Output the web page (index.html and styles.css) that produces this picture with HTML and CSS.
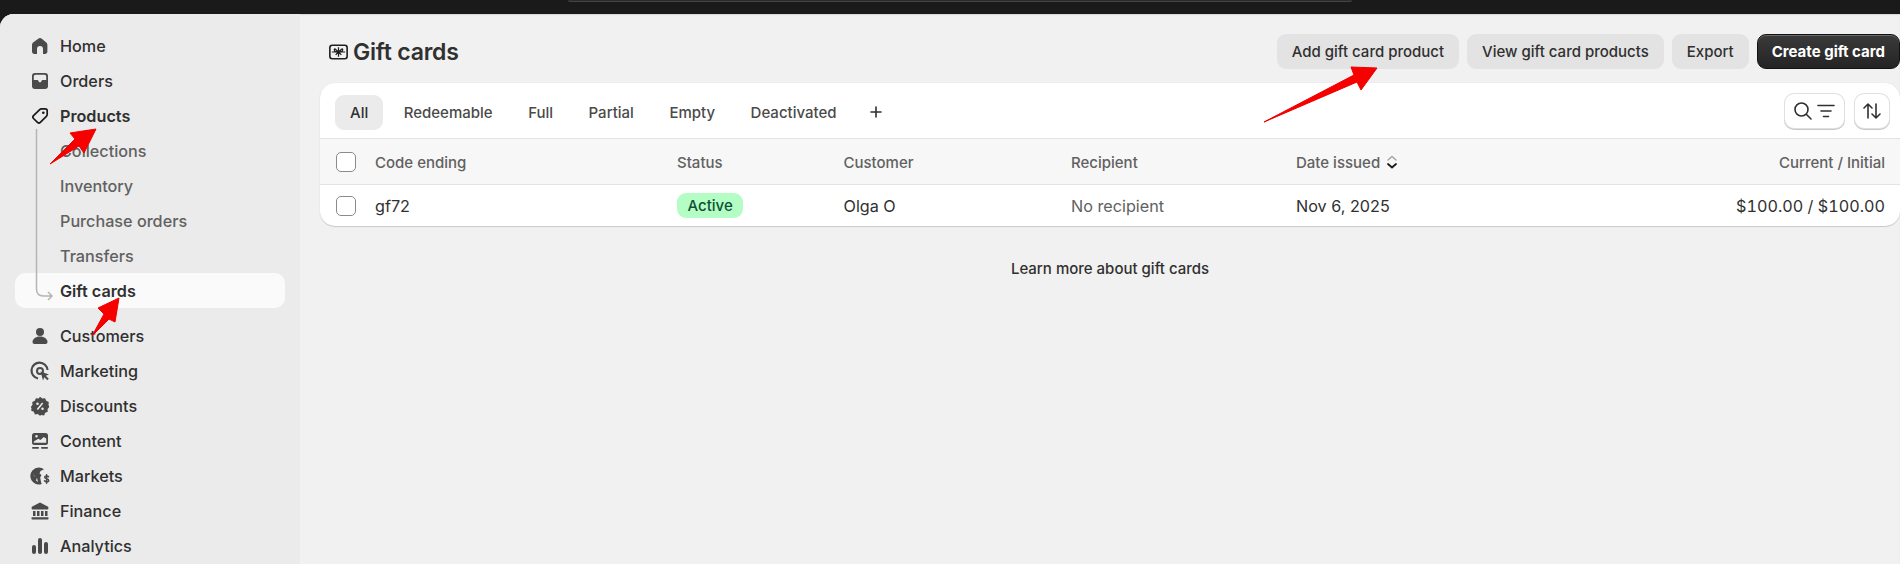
FILE: index.html
```html
<!DOCTYPE html>
<html lang="en">
<head>
<meta charset="utf-8">
<title>Gift cards</title>
<link rel="stylesheet" href="styles.css">
</head>
<body>
<div class="topbar"><div class="searchbox"></div></div>
<div class="app">
  <nav class="sidebar">
    <a class="nav-item"><svg class="nav-icon" viewBox="0 0 20 20"><path fill="#4a4a4a" d="M8.200 2.700a2.800 2.800 0 0 1 3.600 0l4.200 3.600c.9.700 1.400 1.800 1.400 2.900v6.300c0 1.400-1.100 2.500-2.500 2.500H13V13a3 3 0 0 0-6 0v5H4.500c-1.400 0-2.500-1.100-2.500-2.500V9.200c0-1.100.5-2.200 1.400-2.900z"/></svg>Home</a>
    <a class="nav-item"><svg class="nav-icon" viewBox="0 0 20 20"><path fill="#4a4a4a" fill-rule="evenodd" d="M5 2h10a3 3 0 0 1 3 3v10a3 3 0 0 1-3 3H5a3 3 0 0 1-3-3V5a3 3 0 0 1 3-3zM3.800 5.500V9h3.500c.6 0 1 .4 1.200.9.2.8.8 1.300 1.500 1.300s1.300-.5 1.500-1.300c.2-.5.6-.9 1.200-.9h3.500V5.500c0-1-.7-1.700-1.700-1.700h-9c-1 0-1.700.7-1.700 1.700z"/></svg>Orders</a>
    <a class="nav-item nav-strong"><svg class="nav-icon" viewBox="0 0 20 20"><path fill="none" stroke="#1a1a1a" stroke-width="1.700" stroke-linejoin="round" d="M11.500 2.800h3.700c1.100 0 2 .9 2 2v3.700c0 .7-.3 1.300-.8 1.800l-6.100 6.100c-.8.800-2 .8-2.800 0l-4-3.900c-.8-.8-.8-2 0-2.800l6.200-6.100c.5-.5 1.100-.8 1.800-.8z"/><circle cx="13.300" cy="6.700" r="1.300" fill="#1a1a1a"/></svg>Products</a>
    <a class="nav-item nav-sub">Collections</a>
    <a class="nav-item nav-sub">Inventory</a>
    <a class="nav-item nav-sub">Purchase orders</a>
    <a class="nav-item nav-sub">Transfers</a>
    <a class="nav-item nav-sub nav-active">Gift cards</a>
    <svg class="tree-line" width="20" height="175" viewBox="0 0 20 175"><path fill="none" stroke="#b5b5b5" stroke-width="1.500" d="M1.500 0V160q0 7 7 7h8M13 163l4 4-4 4"/></svg>
    <div class="nav-group">
      <a class="nav-item"><svg class="nav-icon" viewBox="0 0 20 20"><circle cx="10" cy="6" r="4" fill="#4a4a4a"/><path fill="#4a4a4a" d="M2.500 16c0-3 3-5.500 7.500-5.500s7.500 2.500 7.500 5.500c0 1.200-.8 2-2 2h-11c-1.200 0-2-.8-2-2z"/></svg>Customers</a>
      <a class="nav-item"><svg class="nav-icon" viewBox="0 0 20 20"><path fill="none" stroke="#4a4a4a" stroke-width="2.200" d="M8 17.500A8 8 0 1 1 17.500 9"/><circle cx="10" cy="10" r="3" fill="none" stroke="#4a4a4a" stroke-width="2"/><path fill="#4a4a4a" d="M10.500 10.500l8.500 3-3.200 1.300 3 3-1.500 1.500-3-3-1.300 3.200z"/></svg>Marketing</a>
      <a class="nav-item"><svg class="nav-icon" viewBox="0 0 20 20"><path fill="#4a4a4a" fill-rule="evenodd" d="M10 .8l2.300 1.700 2.800-.3 1.100 2.600 2.600 1.100-.3 2.800L19.200 11l-1.700 2.300.3 2.400-2.600 1.100-1.100 2.600-2.800-.3L10 19.800l-2.300-1.700-2.800.3-1.100-2.600-2.600-1.100.3-2.400L.8 11l1.700-2.300-.3-2.800 2.600-1.100 1.100-2.600 2.800.3zM12 6.500L6.800 13l1.200 1 5.200-6.500zM7.500 6.500a1.300 1.300 0 1 0 0 2.600 1.300 1.300 0 0 0 0-2.600zM12.500 11.500a1.300 1.300 0 1 0 0 2.600 1.300 1.300 0 0 0 0-2.600z"/></svg>Discounts</a>
      <a class="nav-item"><svg class="nav-icon" viewBox="0 0 20 20"><path fill="#4a4a4a" fill-rule="evenodd" d="M4.500 2h11A2.500 2.500 0 0 1 18 4.500v7a2.500 2.500 0 0 1-2.500 2.500h-11A2.500 2.500 0 0 1 2 11.500v-7A2.500 2.500 0 0 1 4.500 2zM3.800 10.500v1.200h12.400V7.500l-2.500-1.500-3.200 3-2.200-1.200zM6.500 4a1.300 1.300 0 1 0 0 2.600 1.300 1.300 0 0 0 0-2.600z"/><rect x="2" y="16" width="7" height="1.700" rx=".8" fill="#4a4a4a"/><rect x="11" y="16" width="7" height="1.700" rx=".8" fill="#4a4a4a"/></svg>Content</a>
      <a class="nav-item"><svg class="nav-icon" viewBox="0 0 20 20"><path fill="#4a4a4a" d="M9 1.500a8.500 8.500 0 0 1 5 1.700l-3.500 1.800-1 2.500 2 1.500-1.300 2.500.8 4.500.7 2a8.500 8.500 0 1 1-2.700-16.500zM3 7l1 3 3 1.500-1 3 2 1.500-1-4-3-2.500z"/><path fill="none" stroke="#4a4a4a" stroke-width="1.500" stroke-linecap="round" d="M18.500 10.800c-.5-.7-1.200-.9-2-.9-1 0-1.800.5-1.800 1.400 0 2 4 1 4 3.100 0 .9-.9 1.400-2 1.400-.9 0-1.700-.3-2.200-1M16.600 8.800v8.400"/></svg>Markets</a>
      <a class="nav-item"><svg class="nav-icon" viewBox="0 0 20 20"><path fill="#4a4a4a" d="M10 1.500l7.700 4c.5.300.7.700.7 1.200v.8c0 .5-.4.900-.9.900h-15c-.5 0-.9-.4-.9-.9v-.8c0-.5.200-.9.700-1.200zM3 10h2.500v5H3zM7 10h2.500v5H7zM11 10h2.500v5H11zM15 10h2.500v5H15zM2 16.300h16c.3 0 .5.200.5.500v1c0 .4-.3.700-.7.700H2.200c-.4 0-.7-.3-.7-.7v-1c0-.3.200-.5.500-.5z"/></svg>Finance</a>
      <a class="nav-item"><svg class="nav-icon" viewBox="0 0 20 20"><rect x="2" y="9" width="4" height="9" rx="2" fill="#4a4a4a"/><rect x="8" y="2" width="4" height="16" rx="2" fill="#4a4a4a"/><rect x="14" y="6" width="4" height="12" rx="2" fill="#4a4a4a"/></svg>Analytics</a>
    </div>
  </nav>

  <main class="main">
    <header class="page-header">
      <h1 class="title"><svg class="title-icon" viewBox="0 0 20 16"><rect x=".9" y=".9" width="18.200" height="14.200" rx="2.500" fill="none" stroke="#1f1f1f" stroke-width="1.700"/><path fill="none" stroke="#1f1f1f" stroke-width="1.300" d="M3 8h14M10 3v10M10 8L6.500 4.800C5.500 4.300 5 6.500 6.500 7.300zM10 8l3.500-3.200c1-.5 1.500 1.700 0 2.500zM10 8l-3 3M10 8l3 3"/></svg>Gift cards</h1>
      <div class="actions">
        <button class="btn">Add gift card product</button>
        <button class="btn">View gift card products</button>
        <button class="btn">Export</button>
        <button class="btn btn-primary">Create gift card</button>
      </div>
    </header>

    <section class="card">
      <div class="tabs">
        <span class="tab tab-active">All</span>
        <span class="tab">Redeemable</span>
        <span class="tab">Full</span>
        <span class="tab">Partial</span>
        <span class="tab">Empty</span>
        <span class="tab">Deactivated</span>
        <span class="tab tab-add"><svg width="14" height="14" viewBox="0 0 14 14"><path stroke="#303030" stroke-width="1.600" stroke-linecap="round" d="M7 2v10M2 7h10"/></svg></span>
        <div class="tools">
          <button class="tool tool-wide" aria-label="Search and filter">
            <svg width="20" height="20" viewBox="0 0 20 20"><circle cx="8.500" cy="8.500" r="6.500" fill="none" stroke="#303030" stroke-width="1.600"/><path stroke="#303030" stroke-width="1.600" stroke-linecap="round" d="M13.500 13.500L18 18"/></svg>
            <svg width="20" height="20" viewBox="0 0 20 20"><path stroke="#303030" stroke-width="1.600" stroke-linecap="round" d="M2 4.500h16M5 10h10M7.500 15.500h5"/></svg>
          </button>
          <button class="tool" aria-label="Sort">
            <svg width="20" height="20" viewBox="0 0 20 20"><path fill="none" stroke="#303030" stroke-width="1.600" stroke-linecap="round" stroke-linejoin="round" d="M6 17V3M2 7l4-4 4 4M14 3v14M10 13l4 4 4-4"/></svg>
          </button>
        </div>
      </div>
      <div class="row row-head">
        <span class="check"></span>
        <span>Code ending</span>
        <span>Status</span>
        <span>Customer</span>
        <span>Recipient</span>
        <span class="sorted">Date issued
          <svg width="12" height="16" viewBox="0 0 12 16"><path fill="none" stroke="#a0a0a0" stroke-width="1.300" stroke-linecap="round" stroke-linejoin="round" d="M2 6l4-3.500L10 6"/><path fill="none" stroke="#1a1a1a" stroke-width="1.800" stroke-linecap="round" stroke-linejoin="round" d="M2 10l4 3.500L10 10"/></svg>
        </span>
        <span class="cell-right">Current / Initial</span>
      </div>
      <div class="row row-body">
        <span class="check"></span>
        <span>gf72</span>
        <span><span class="badge">Active</span></span>
        <span>Olga O</span>
        <span class="muted">No recipient</span>
        <span>Nov 6, 2025</span>
        <span class="cell-right amount">$100.00 / $100.00</span>
      </div>
    </section>
    <p class="learn">Learn more about gift cards</p>
  </main>
</div>

<svg class="annotations" width="1900" height="564" viewBox="0 0 1900 564">
  <path fill="#f60000" stroke="#ee0000" stroke-width="1" stroke-linejoin="round" d="M96 129L70 133L75 139L50 164L79 146L84 153z"/>
  <path fill="#f60000" stroke="#ee0000" stroke-width="1" stroke-linejoin="round" d="M119 298L98 308L104 314L92 336L109 319L115 322z"/>
  <path fill="#f60000" stroke="#ee0000" stroke-width="1" stroke-linejoin="round" d="M1377 68L1351 67L1354 75L1264 122L1357 82L1361 90z"/>
</svg>
</body>
</html>
```

FILE: styles.css
```css
* { box-sizing: border-box; }
html, body { margin: 0; height: 564px; overflow: hidden; }
body {
  position: relative;
  background: #1a1a1a;
  font-family: Inter, "Liberation Sans", sans-serif;
  font-size: 15px;
  color: #303030;
}
.topbar { height: 14px; display: flex; justify-content: center; }
.searchbox {
  width: 784px;
  height: 2px;
  margin-left: 20px;
  background: #2a2a2a;
  border-bottom: 1px solid #444;
  border-radius: 0 0 3px 3px;
}
.app {
  display: flex;
  height: 550px;
  background: #f1f1f1;
  border-top-left-radius: 14px;
  overflow: hidden;
  box-shadow: inset 0 1px 1px #d8d8d8;
}

/* Sidebar */
.sidebar {
  position: relative;
  flex: 0 0 300px;
  padding: 14px 15px 0;
  background: #ebebeb;
}
.nav-item {
  display: flex;
  align-items: center;
  height: 35px;
  padding-left: 15px;
  font-size: 16.200px;
  font-weight: 500;
  color: #303030;
  border-radius: 10px;
}
.nav-icon { flex: none; width: 20px; height: 20px; margin-right: 10px; }
.nav-strong { font-weight: 600; }
.nav-sub { padding-left: 45px; color: #616161; }
.nav-active { background: #fafafa; font-weight: 600; color: #303030; }
.nav-group { margin-top: 10px; }
.tree-line { position: absolute; left: 35px; top: 115px; }

/* Main */
.main { flex: 1; min-width: 0; padding: 20px 0 0 20px; }
.page-header {
  display: flex;
  justify-content: space-between;
  align-items: center;
  height: 35px;
  padding-left: 9px;
  margin-bottom: 14px;
}
.title {
  display: flex;
  align-items: center;
  gap: 5px;
  margin: 0;
  font-size: 23px;
  font-weight: 600;
  color: #303030;
  letter-spacing: -0.2px;
}
.title-icon { width: 19px; height: 16px; }
.actions { display: flex; gap: 8px; }
.btn {
  height: 35px;
  padding: 0 15px;
  border: 0;
  border-radius: 9px;
  background: #e3e3e3;
  font: 500 15px Inter, "Liberation Sans", sans-serif;
  color: #303030;
}
.btn-primary {
  padding: 0 14px;
  border: 1px solid #111;
  background: linear-gradient(#3a3a3a, #242424);
  box-shadow: inset 0 1px 0 #6a6a6a;
  color: #fff;
  font-weight: 650;
}

/* Card */
.card {
  background: #fff;
  border-radius: 15px;
  box-shadow: 0 1px 1px #c9c9c9, 0 0 1px #d4d4d4;
  overflow: hidden;
}
.tabs {
  display: flex;
  align-items: center;
  height: 56px;
  padding: 3px 11px 0 15px;
  border-bottom: 1px solid #e3e3e3;
}
.tab {
  display: flex;
  align-items: center;
  height: 35px;
  padding: 0 15px;
  margin-right: 5.500px;
  border-radius: 9px;
  font-weight: 500;
  color: #4a4a4a;
}
.tab-active { background: #ebebeb; color: #303030; }
.tab-add { padding: 0 12px; }
.tools { display: flex; gap: 11px; margin: -2px 0 0 auto; }
.tool {
  display: flex;
  align-items: center;
  justify-content: center;
  width: 34px;
  height: 34px;
  padding: 0;
  border: 0;
  border-radius: 9px;
  background: #fff;
  box-shadow: 0 0 0 1px #e0e0e0, 0 1px 0 1px #c8c8c8;
}
.tool-wide { width: 59px; gap: 3px; }

.row {
  display: grid;
  grid-template-columns: 39px 302px 166.500px 227.500px 225px 1fr auto;
  align-items: center;
  padding: 0 15px 0 16px;
}
.row-head {
  height: 46px;
  padding-top: 1px;
  background: #f7f7f7;
  border-bottom: 1px solid #e3e3e3;
  font-size: 15px;
  font-weight: 500;
  color: #616161;
}
.row-body { height: 41px; font-size: 16.200px; color: #303030; }
.check {
  display: block;
  width: 20px;
  height: 20px;
  border: 1px solid #8a8a8a;
  border-radius: 5px;
  background: #fff;
}
.sorted { display: flex; align-items: center; gap: 6px; }
.cell-right { text-align: right; }
.amount { font-variant-numeric: tabular-nums; }
.muted { color: #616161; }
.badge {
  display: inline-block;
  padding: 3px 10.500px;
  border-radius: 9px;
  background: #b4fec5;
  color: #0c5132;
  font-size: 15px;
  font-weight: 550;
  line-height: 19px;
}
.learn {
  margin: 33px 0 0;
  text-align: center;
  font-size: 15px;
  font-weight: 550;
  color: #303030;
}

/* Screenshot annotations painted over the page */
.annotations { position: absolute; left: 0; top: 0; pointer-events: none; }
```
